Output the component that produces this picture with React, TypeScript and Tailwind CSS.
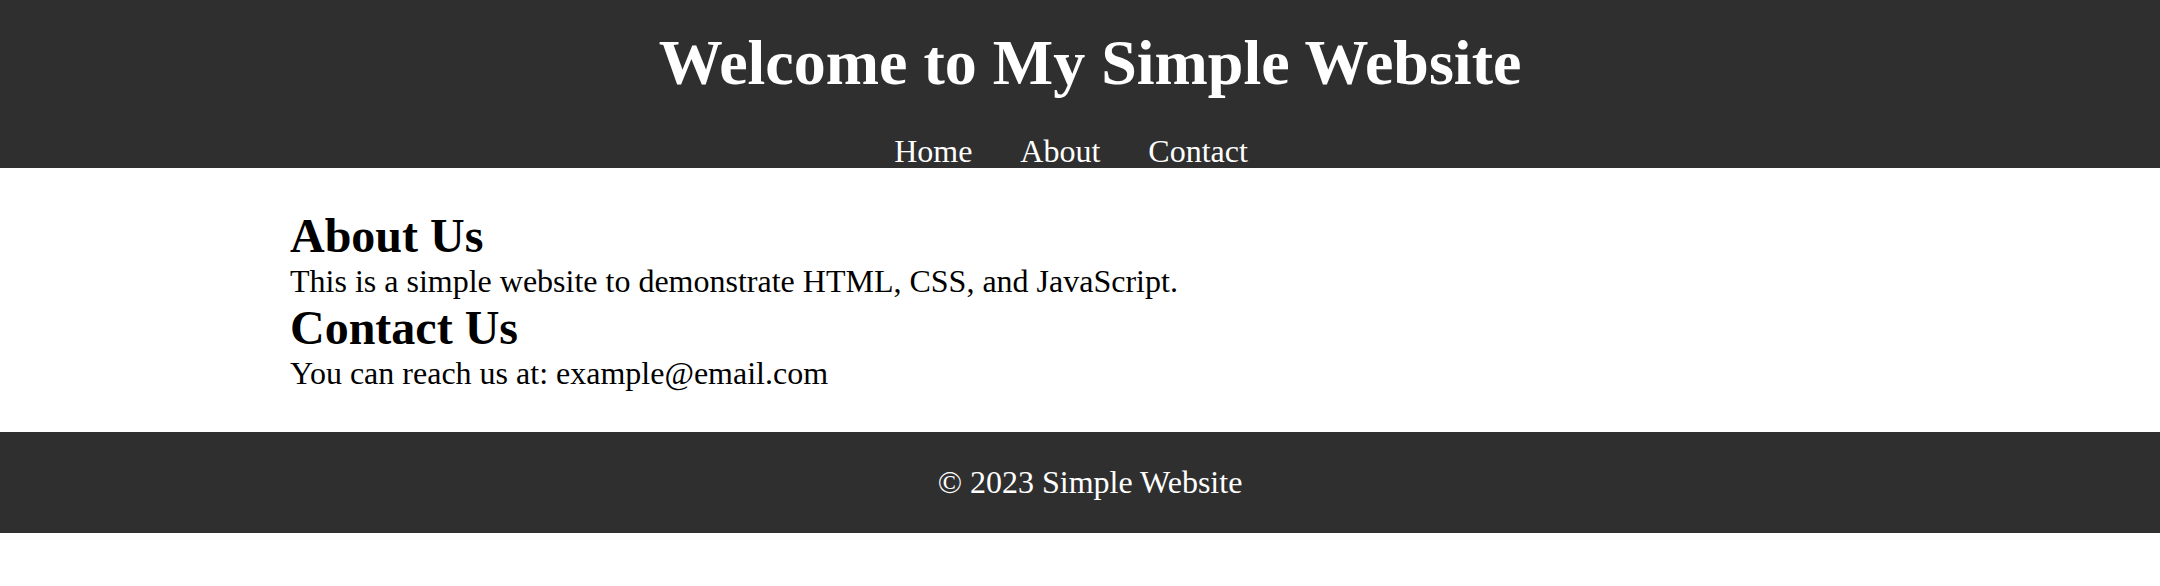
const navLinks = ["Home", "About", "Contact"];

export default function App() {
  return (
    <div className="min-h-[586px] bg-white font-['Liberation_Serif','Times_New_Roman',serif] text-[32px] leading-[1.15] text-black">
      <header className="h-[168px] overflow-hidden bg-[#2f2f2f] pt-[26px] text-center text-white">
        <h1 className="pl-[20px] text-[64px] font-bold leading-[1.15]">Welcome to My Simple Website</h1>
        <nav className="mt-[33px]">
          <ul className="flex justify-center gap-[48px] pr-[18px]">
            {navLinks.map((link) => (
              <li key={link}>
                <a href={`#${link.toLowerCase()}`}>{link}</a>
              </li>
            ))}
          </ul>
        </nav>
      </header>

      <main className="mx-auto w-[1660px] p-[40px]">
        <section id="about">
          <h2 className="text-[48px] font-bold leading-[1.15]">About Us</h2>
          <p>This is a simple website to demonstrate HTML, CSS, and JavaScript.</p>
        </section>
        <section id="contact">
          <h2 className="text-[48px] font-bold leading-[1.15]">Contact Us</h2>
          <p>You can reach us at: example@email.com</p>
        </section>
      </main>

      <footer className="bg-[#2f2f2f] py-[32px] text-center text-white">
        <p className="pl-[20px]">&copy; 2023 Simple Website</p>
      </footer>
    </div>
  );
}
